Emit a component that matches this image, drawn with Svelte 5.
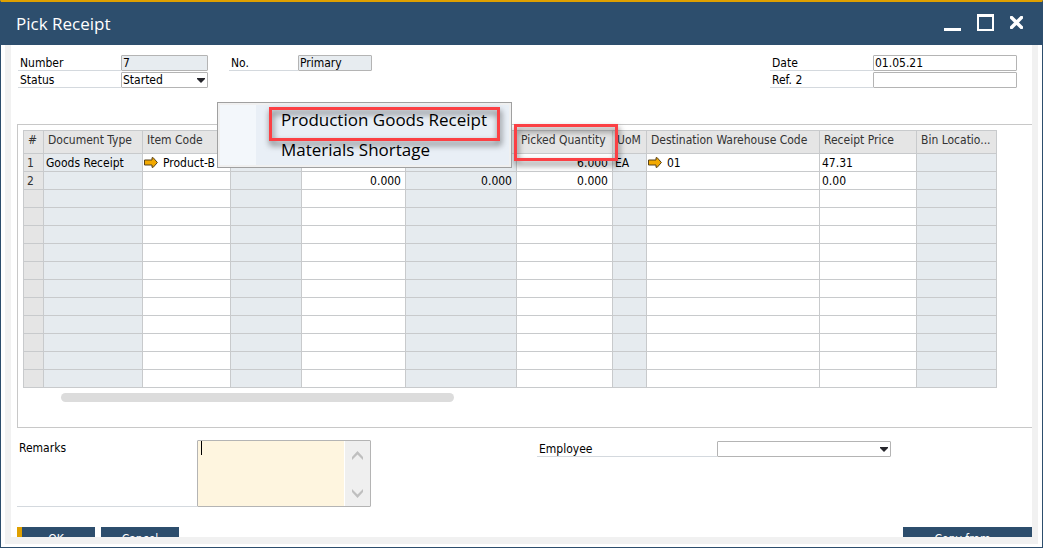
<script>
  const columns = [
    { key: 'n', title: '#', width: 20, kind: 'index' },
    { key: 'type', title: 'Document Type', width: 99, kind: 'locked' },
    { key: 'item', title: 'Item Code', width: 88, link: true },
    { key: 'rev', title: '', width: 71, kind: 'locked' },
    { key: 'planned', title: '', width: 104, numeric: true },
    { key: 'open', title: '', width: 111, kind: 'locked', numeric: true },
    { key: 'picked', title: 'Picked Quantity', width: 96, numeric: true, marked: true },
    { key: 'uom', title: 'UoM', width: 34, kind: 'locked' },
    { key: 'whs', title: 'Destination Warehouse Code', width: 173, link: true },
    { key: 'price', title: 'Receipt Price', width: 97 },
    { key: 'bin', title: 'Bin Locatio...', width: 80, kind: 'locked' }
  ];

  const entries = [
    { n: '1', type: 'Goods Receipt', item: 'Product-B', picked: '6.000', uom: 'EA', whs: '01', price: '47.31' },
    { n: '2', planned: '0.000', open: '0.000', picked: '0.000', price: '0.00' }
  ];
  const rows = [...entries, ...Array.from({ length: 11 }, () => ({}))];

  let remarks = $state('');
</script>

<div class="window">
  <header class="titlebar">
    <h1>Pick Receipt</h1>
    <div class="controls">
      <button aria-label="Minimize">
        <svg width="17" height="17" viewBox="0 0 17 17"><path d="M0 14h17v3H0z" fill="#fff" /></svg>
      </button>
      <button aria-label="Maximize">
        <svg width="17" height="17" viewBox="0 0 17 17"><path d="M0 0h17v17H0zM2 3v12h13V3z" fill="#fff" fill-rule="evenodd" /></svg>
      </button>
      <button aria-label="Close" class="close">
        <svg width="13" height="13" viewBox="0 0 13 13"><path d="M1.5 1.5l10 10M11.5 1.5l-10 10" stroke="#fff" stroke-width="3.4" stroke-linecap="square" /></svg>
      </button>
    </div>
  </header>

  <main>
    <div class="form">
      <div class="fields">
        <div class="field">
          <label for="number">Number</label>
          <input id="number" class="short readonly" value="7" readonly />
        </div>
        <div class="field">
          <label for="status">Status</label>
          <span class="picker short">
            <select id="status"><option>Started</option></select>
            <svg width="8" height="5" viewBox="0 0 8 5"><path d="M0 0h8v1L4 5 0 1z" fill="#26262c" /></svg>
          </span>
        </div>
      </div>
      <div class="fields series">
        <div class="field">
          <label for="series">No.</label>
          <input id="series" class="readonly" value="Primary" readonly />
        </div>
      </div>
      <div class="fields dates">
        <div class="field">
          <label for="date">Date</label>
          <input id="date" value="01.05.21" />
        </div>
        <div class="field">
          <label for="ref">Ref. 2</label>
          <input id="ref" value="" />
        </div>
      </div>
    </div>

    <section class="lines">
      <table>
        <colgroup>
          {#each columns as c}<col style="width: {c.width}px" />{/each}
        </colgroup>
        <thead>
          <tr>
            {#each columns as c}
              <th class={c.kind}>{c.title}{#if c.marked}<span class="mark"></span>{/if}</th>
            {/each}
          </tr>
        </thead>
        <tbody>
          {#each rows as row}
            <tr>
              {#each columns as c}
                <td class={c.kind} class:numeric={c.numeric}>
                  {#if c.link && row[c.key]}
                    <svg class="arrow" width="14" height="11" viewBox="0 0 14 11"><path d="M.5 3h7.5V.7h1.2L13.4 5.5 9.2 10.3H8V8H.5z" fill="#f2a900" stroke="#59431a" /></svg>
                  {/if}{row[c.key] ?? ''}
                </td>
              {/each}
            </tr>
          {/each}
        </tbody>
      </table>
      <div class="scroll"></div>
    </section>

    <div class="footer">
      <div class="field remarks">
        <label for="remarks">Remarks</label>
        <div class="memo">
          <textarea id="remarks" bind:value={remarks}></textarea>
          <span class="caret"></span>
          <div class="steps">
            <svg width="11" height="9" viewBox="0 0 11 9"><path d="M0 6L5.500 0 11 6v3L5.500 3.600 0 9z" fill="#bfbfbf" /></svg>
            <svg width="11" height="9" viewBox="0 0 11 9"><path d="M0 3L5.500 9 11 3V0L5.500 5.400 0 0z" fill="#bfbfbf" /></svg>
          </div>
        </div>
      </div>
      <div class="field employee">
        <label for="employee">Employee</label>
        <span class="picker">
          <select id="employee"><option></option></select>
          <svg width="8" height="5" viewBox="0 0 8 5"><path d="M0 0h8v1L4 5 0 1z" fill="#26262c" /></svg>
        </span>
      </div>
    </div>

    <div class="actions">
      <button class="primary">OK</button>
      <button>Cancel</button>
      <button class="copy">Copy from</button>
    </div>
  </main>

  <div class="menu" role="menu">
    <button role="menuitem">Production Goods Receipt<span class="mark"></span></button>
    <button role="menuitem">Materials Shortage</button>
  </div>
</div>

<style>
  :global(body) {
    margin: 0;
  }
  .window,
  .window * {
    box-sizing: border-box;
  }
  .window {
    position: relative;
    display: flex;
    flex-direction: column;
    height: 100vh;
    border: 1px solid #2d4e6d;
    border-top: 2px solid #dfa000;
    background: #fff;
    color: #000;
    font: 12px/16px 'DejaVu Sans Condensed', 'DejaVu Sans', Tahoma, sans-serif;
  }
  button,
  input,
  select,
  textarea {
    font: inherit;
    color: inherit;
    border: 0;
    margin: 0;
    padding: 0;
    background: none;
    border-radius: 0;
  }
  .titlebar {
    display: flex;
    align-items: center;
    justify-content: space-between;
    flex: none;
    height: 43px;
    margin: 0 -1px;
    padding: 0 20px 0 16px;
    background: #2d4e6d;
    color: #fff;
  }
  h1 {
    margin: 0;
    font: 17px/24px 'Open Sans', 'Noto Sans', sans-serif;
  }
  .controls {
    display: flex;
    align-items: center;
    gap: 16px;
    padding-bottom: 2px;
  }
  .controls button,
  .controls svg {
    display: block;
  }
  main {
    flex: 1;
    min-height: 0;
    overflow: hidden;
    margin: 0 4px 3px;
    border: 6px solid #f1f1f1;
    border-top: 0;
    border-bottom-width: 7px;
    padding: 10px 0 0 6px;
  }
  .form {
    display: flex;
    padding: 0 15px 0 1px;
  }
  .fields {
    display: grid;
    align-content: start;
    gap: 1px;
  }
  .field {
    display: flex;
    height: 16px;
  }
  label {
    width: 103px;
    padding-left: 2px;
    border-bottom: 1px solid #d4d9de;
  }
  input,
  .picker {
    width: 144px;
    height: 16px;
    padding: 0 1px;
    border: 1px solid #b4b4b4;
    border-radius: 1px;
  }
  .short {
    width: 87px;
  }
  .readonly {
    background: #e7ecf0;
  }
  .picker {
    position: relative;
    display: block;
  }
  select {
    display: block;
    appearance: none;
    width: 100%;
    height: 14px;
    line-height: 14px;
  }
  .picker svg {
    position: absolute;
    right: 2px;
    top: 5px;
    pointer-events: none;
  }
  .series {
    margin-left: 21px;
  }
  .series label {
    width: 69px;
  }
  .series input {
    width: 74px;
  }
  .dates {
    margin-left: auto;
  }
  .lines {
    height: 304px;
    margin-top: 36px;
    padding: 5px;
    border: 1px solid #c8c8c8;
    border-right: 0;
  }
  table {
    table-layout: fixed;
    width: 974px;
    border-collapse: separate;
    border-spacing: 0;
    border: 1px solid #c8cacc;
    border-width: 1px 0 0 1px;
  }
  th,
  td {
    height: 18px;
    padding: 0 2px;
    border: 1px solid #c8cacc;
    border-width: 0 1px 1px 0;
    line-height: 16px;
    white-space: nowrap;
    overflow: hidden;
  }
  th {
    position: relative;
    height: 23px;
    padding: 0 4px 4px;
    background: #e5e5e5;
    color: #333;
    font-weight: 400;
    text-align: left;
    overflow: visible;
  }
  .locked {
    background: #e6ebef;
  }
  .index {
    background: #e5e5e5;
    color: #333;
    padding-left: 3px;
  }
  th.index {
    padding-left: 4px;
  }
  th.locked {
    background: #e5e5e5;
  }
  .numeric {
    padding-right: 4px;
    text-align: right;
  }
  .arrow {
    margin: 0 5px 0 -1px;
    vertical-align: -1px;
  }
  .scroll {
    width: 393px;
    height: 9px;
    margin: 5px 0 0 38px;
    border-radius: 5px;
    background: #dcdcdc;
  }
  .mark {
    position: absolute;
    z-index: 1;
    border: 3px solid #fb4044;
    filter: drop-shadow(1px 4px 3px #0009);
    pointer-events: none;
  }
  th .mark {
    inset: -7px -6px -8px -3px;
  }
  .footer {
    display: flex;
    align-items: flex-start;
    padding-top: 12px;
  }
  .remarks {
    height: 67px;
  }
  .remarks label,
  .employee label {
    width: 180px;
  }
  .memo {
    position: relative;
    display: flex;
    width: 174px;
    border: 1px solid #b4b4b4;
    border-radius: 1px;
  }
  textarea {
    flex: 1;
    min-width: 0;
    padding: 0 3px;
    border-right: 1px solid #fff;
    background: #fef5df;
    resize: none;
  }
  .caret {
    position: absolute;
    left: 3px;
    top: 0;
    width: 1px;
    height: 14px;
    background: #000;
  }
  .steps {
    display: flex;
    flex-direction: column;
    justify-content: space-between;
    align-items: center;
    width: 25px;
    padding: 10px 0 8px;
    background: #efefef;
  }
  .employee {
    margin: 1px 0 0 166px;
  }
  .employee .picker {
    width: 174px;
  }
  .actions {
    display: flex;
    gap: 6px;
    margin-top: 20px;
  }
  .actions button {
    width: 78px;
    height: 24px;
    background: #2d4e6d;
    color: #fff;
  }
  .actions .primary {
    padding-right: 5px;
    border-left: 5px solid #dfa000;
  }
  .actions .copy {
    width: 129px;
    margin-left: auto;
    padding-right: 10px;
  }
  .menu {
    position: absolute;
    z-index: 2;
    left: 216px;
    top: 100px;
    width: 295px;
    padding: 2px;
    border: 1px solid #a0a0a0;
    background: linear-gradient(90deg, #f3f7fb 36px, #e9eff6 36px) content-box, #f0f0f0;
  }
  .menu button {
    position: relative;
    display: block;
    width: 100%;
    height: 30px;
    padding-left: 61px;
    font: 17px/30px 'Open Sans', 'Noto Sans', sans-serif;
    text-align: left;
    white-space: nowrap;
  }
  .menu .mark {
    inset: 2px 9px -6px 49px;
  }
</style>
